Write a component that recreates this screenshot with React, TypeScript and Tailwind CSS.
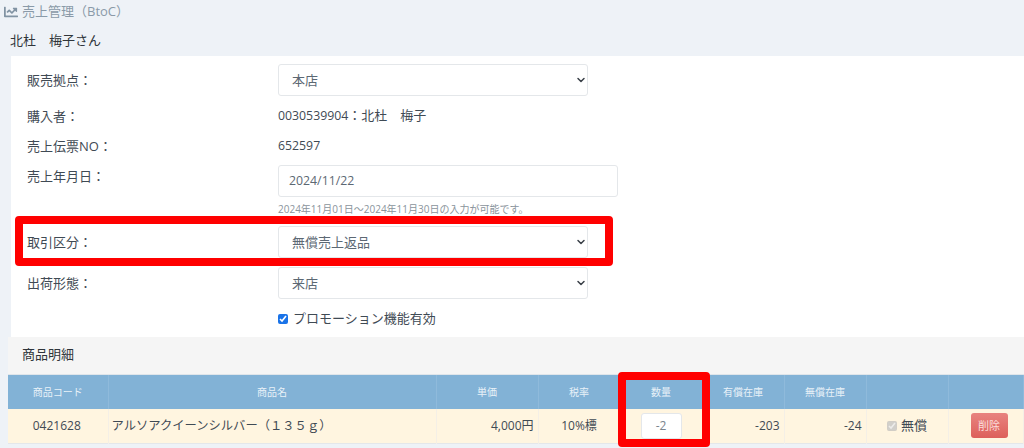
import React from 'react';
import { ChevronDown } from 'lucide-react';
import { FaChartLine } from 'react-icons/fa';

const font = { fontFamily: '"Open Sans", "Noto Sans CJK JP", sans-serif' };

const SelectBox = ({ value }: { value: string }) => (
  <div className="relative w-[310px] h-8 flex items-center pl-[13px] pt-[1px] bg-white border border-[#e4e7ea] rounded-[3px] text-[13px] text-[#5c6873]">
    {value}
    <ChevronDown className="absolute right-0 top-[9px] w-[12px] h-[12px] text-[#3a4048]" strokeWidth={3} />
  </div>
);

const Row = ({ label, className, children }: { label: string; className?: string; children: React.ReactNode }) => (
  <div className={`flex items-center ${className ?? ''}`}>
    <div className="w-[251px] pt-[1px] text-[13px] text-[#3f4a54]">{label}</div>
    {children}
  </div>
);

const headers = ['商品コード', '商品名', '単価', '税率', '数量', '有償在庫', '無償在庫', '', ''];

export default function App() {
  return (
    <div style={font} className="relative w-[1024px] h-[448px] overflow-hidden bg-[#eef2f7]">
      <div className="flex items-center gap-[4px] h-[22px] pl-[4px] pt-[1px] text-[13px] text-[#8a9aa8]">
        <FaChartLine className="w-[14px] h-[14px] text-[#8193a3]" />
        売上管理（BtoC）
      </div>
      <div className="h-[34px] pt-[8px] pl-[10px] text-[13px] leading-[20px] text-[#2f353a]">北杜　梅子さん</div>

      <div className="ml-[3px]">
        <div className="ml-[8px] bg-white h-[281px] pl-[16px] pt-[8px]">
          <Row label="販売拠点：">
            <SelectBox value="本店" />
          </Row>
          <Row label="購入者：" className="mt-[10px] h-5 text-[13px] text-[#3f4a54]">
            <span className="text-[12.3px]">0030539904</span>：北杜　梅子
          </Row>
          <Row label="売上伝票NO：" className="mt-[10px] h-5 text-[12.3px] text-[#3f4a54]">
            652597
          </Row>
          <div className="flex items-start mt-[9px]">
            <div className="w-[251px] text-[13px] text-[#3f4a54] pt-[2px]">売上年月日：</div>
            <div>
              <div className="w-[340px] h-8 flex items-center pl-[10px] bg-white border border-[#e4e7ea] rounded-[3px] text-[12.3px] text-[#5c6873]">
                2024/11/22
              </div>
              <div className="mt-[5px] text-[10px] leading-[14px] text-[#8a949c]">
                2024年11月01日～2024年11月30日の入力が可能です。
              </div>
            </div>
          </div>
          <Row label="取引区分：" className="mt-[10px]">
            <SelectBox value="無償売上返品" />
          </Row>
          <Row label="出荷形態：" className="mt-[9px]">
            <SelectBox value="来店" />
          </Row>
          <div className="flex items-center gap-[5px] ml-[251px] mt-[10px] h-5 text-[13px] text-[#3f4a54]">
            <input type="checkbox" defaultChecked readOnly className="w-[10px] h-[10px] accent-[#1a73e8]" />
            プロモーション機能有効
          </div>
        </div>
      </div>

      <div className="absolute left-[8px] right-0 top-[337px]">
        <div className="h-[38px] bg-[#f5f5f5] border-b border-[#dfe5ea] pl-[14px] pb-[2px] flex items-center text-[13px] text-[#2f353a]">
          商品明細
        </div>
        <table className="w-full table-fixed border-collapse">
          <colgroup>
            <col className="w-[100px]" />
            <col className="w-[328px]" />
            <col className="w-[102px]" />
            <col className="w-[82px]" />
            <col className="w-[82px]" />
            <col className="w-[82px]" />
            <col className="w-[82px]" />
            <col className="w-[82px]" />
            <col />
          </colgroup>
          <thead>
            <tr className="h-[34px] bg-[#82b2d6]">
              {headers.map((h, i) => (
                <th key={i} className="border-x border-[#8fbadb] first:border-l-0 pt-[1px] text-[10px] font-normal text-[#e8f1f8] text-center">
                  {h}
                </th>
              ))}
            </tr>
          </thead>
          <tbody>
            <tr className="h-[34px] bg-[#fff5e0] border-b border-[#e4e7ea] text-[12px] text-[#3f4a54]">
              <td className="text-center pr-[2px] pt-[1px] border-x border-[#f4efe6] first:border-l-0">0421628</td>
              <td className="pl-[3px] pt-[1px] text-[12.3px] border-x border-[#f4efe6]">アルソアクイーンシルバー（１３５ｇ）</td>
              <td className="text-right pr-[4px] pt-[1px] border-x border-[#f4efe6]">4,000円</td>
              <td className="text-center pt-[1px] border-x border-[#f4efe6]">10%標</td>
              <td className="border-x border-[#f4efe6]">
                <div className="mx-auto w-[41px] h-[26px] flex items-center justify-center bg-white border border-[#e4e7ea] rounded-[3px] text-[#7b858d]">-2</div>
              </td>
              <td className="text-right pr-[4px] pt-[1px] border-x border-[#f4efe6]">-203</td>
              <td className="text-right pr-[4px] pt-[1px] border-x border-[#f4efe6]">-24</td>
              <td className="border-x border-[#f4efe6]">
                <div className="flex items-center justify-center gap-[4px] text-[13px]">
                  <input type="checkbox" defaultChecked disabled className="w-[10px] h-[10px]" />
                  無償
                </div>
              </td>
              <td className="border-x border-[#f4efe6]">
                <div className="ml-[22px] w-[37px] h-[25px] flex items-center justify-center rounded-[3px] bg-gradient-to-b from-[#e8837f] to-[#dd5f5b] text-[#fbdedc] text-[11px]">削除</div>
              </td>
            </tr>
          </tbody>
        </table>
      </div>

      <div className="absolute left-[15px] top-[216px] w-[598px] h-[50px] border-[8px] border-[#ff0000] rounded-[4px]" />
      <div className="absolute left-[618px] top-[372px] w-[92px] h-[75px] border-[8px] border-[#ff0000] rounded-[4px]" />
    </div>
  );
}
